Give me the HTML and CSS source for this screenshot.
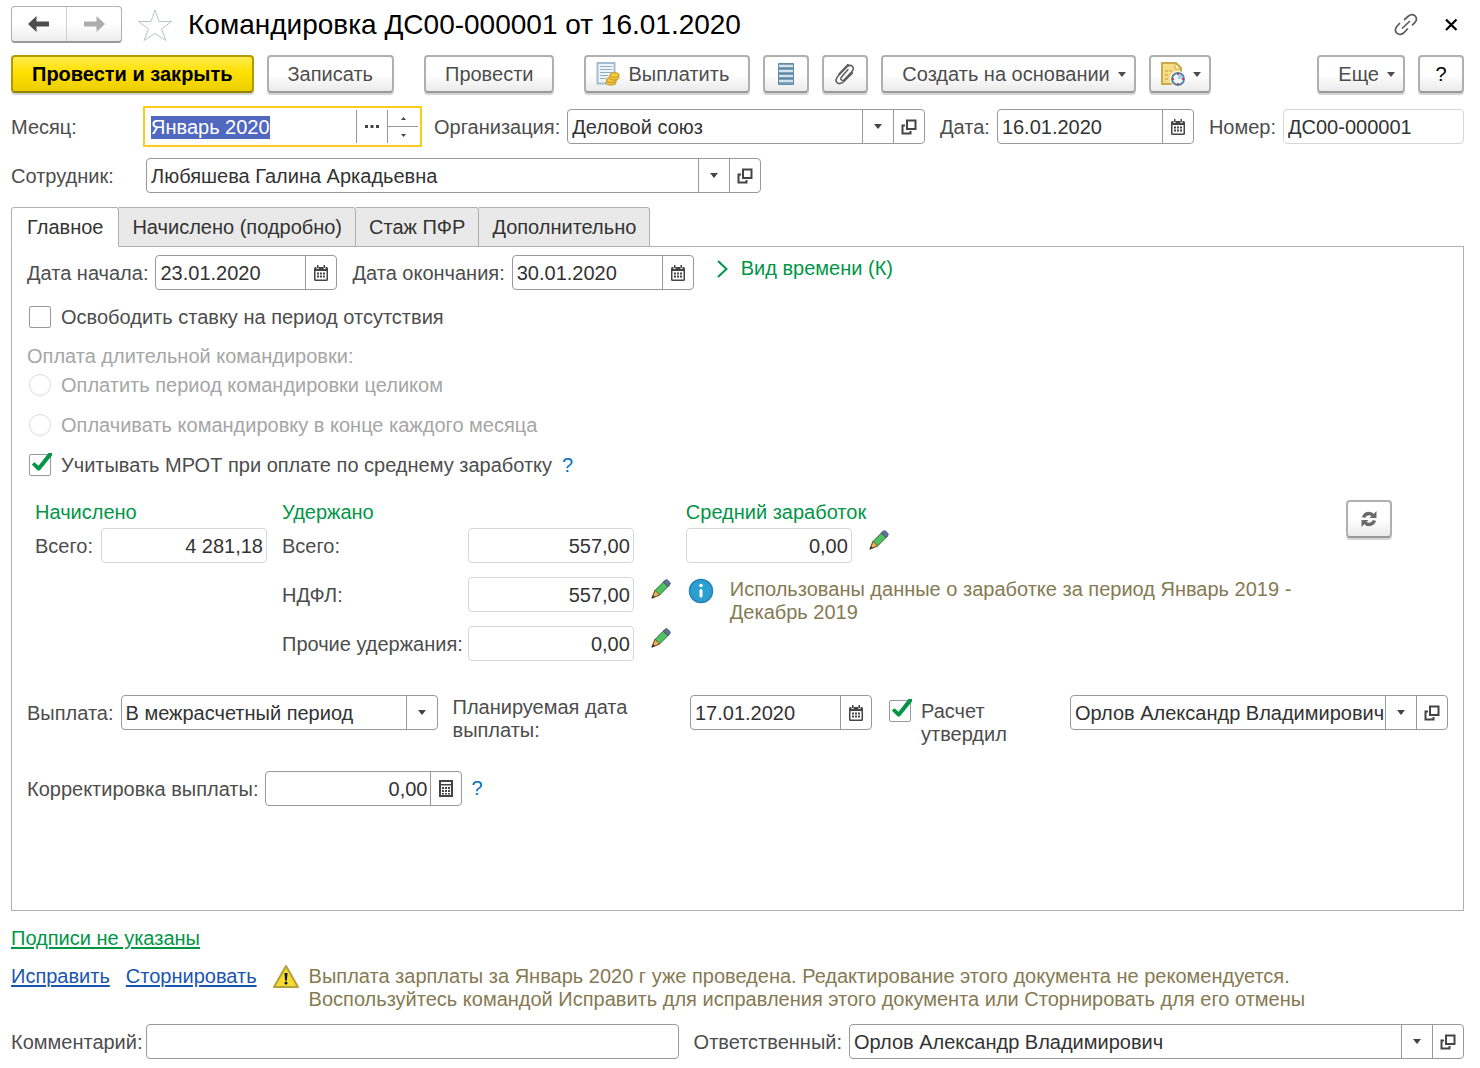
FILE: index.html
```html
<!DOCTYPE html>
<html lang="ru">
<head>
<meta charset="utf-8">
<title>Командировка ДС00-000001 от 16.01.2020</title>
<link rel="stylesheet" href="styles.css">
</head>
<body>
<svg class="sprite" aria-hidden="true">
  <symbol id="i-arrow" viewBox="0 0 8 5"><path d="M0 0h8L4 5z" fill="currentColor"/></symbol>
  <symbol id="i-open" viewBox="0 0 16 16"><path d="M6 1.500h8.500v8.500H6zM4 6.500H1.500v8H9.500V12" fill="none" stroke="currentColor" stroke-width="2"/></symbol>
  <symbol id="i-calendar" viewBox="0 0 14 16">
    <path d="M1.500 2h11A1.500 1.500 0 0 1 14 3.500v11a1.500 1.500 0 0 1-1.500 1.500h-11A1.500 1.500 0 0 1 0 14.500v-11A1.500 1.500 0 0 1 1.500 2z" fill="currentColor"/>
    <path d="M1.500 6h11v8.500h-11zM2.500 1h2v3h-2zM9.500 1h2v3h-2z" fill="#fff"/>
    <path d="M3 0h1.500v3H3zM9.500 0H11v3H9.500zM6 7.500h2v2H6zM9 7.500h2v2H9zM3 10.500h2v2H3zM6 10.500h2v2H6zM9 10.500h2v2H9zM3 7.500h2v2H3z" fill="currentColor"/>
  </symbol>
  <symbol id="i-calc" viewBox="0 0 14 17">
    <path d="M1 1h12v15H1z" fill="#fff" stroke="currentColor" stroke-width="2"/>
    <path d="M2 4h10v1.500H2zM3 7h2v2H3zM6 7h2v2H6zM9 7h2v2H9zM3 10h2v2H3zM6 10h2v2H6zM9 10h2v2H9zM3 13h2v1.500H3zM6 13h2v1.500H6zM9 13h2v1.500H9z" fill="currentColor"/>
  </symbol>
  <symbol id="i-check" viewBox="0 0 22 22" overflow="visible"><path d="M2.800 10.500 5.500 8.300 9.500 11.800 19.500-1 23-1v2.500L11.200 16q-1.500 1.200-3 0z" fill="#009646"/></symbol>
  <symbol id="i-pencil" viewBox="0 0 22 22">
    <path d="M1 21 4.500 12.500 15 2l5 5L9.500 17.500z" fill="#4ec35f" stroke="#245c33"/>
    <path d="M1 21 4.500 12.500 9.500 17.500z" fill="#f1b155" stroke="#6e4a20"/>
    <path d="M1 21l1.300-3.200 2 1.900z" fill="#333"/>
    <path d="M13.500 3.500 16 1.200q1-.9 2-.1l2.800 2.700q.8 1 0 2L18.500 8.400z" fill="#5f7396" stroke="#3e4a66"/>
  </symbol>
</svg>

<header class="header">
  <div class="nav">
    <button type="button" aria-label="Назад"><svg width="22" height="16" viewBox="0 0 22 16"><path d="M0 8 8.500 0v5.500H21v5H8.500V16z" fill="#4d4d4d"/></svg></button>
    <button type="button" aria-label="Вперед"><svg width="22" height="16" viewBox="0 0 22 16"><path d="M22 8 13.500 0v5.500H1v5h12.500V16z" fill="#adadad"/></svg></button>
  </div>
  <button class="icon-button" type="button" aria-label="В избранное"><svg width="36" height="34" viewBox="0 0 36 34"><path d="M18 2l4 11.500h12.500L24.500 21l4.500 11.500L18 25.500 7 32.500 11.500 21 1.500 13.500H14z" fill="#fff" stroke="#bcc3ca"/></svg></button>
  <h1 class="title">Командировка ДС00-000001 от 16.01.2020</h1>
  <button class="icon-button" type="button" aria-label="Получить ссылку"><svg width="24" height="24" viewBox="0 0 24 24" fill="none" stroke="#5c5c5c" stroke-width="1.700" stroke-linecap="round"><path d="M8.500 15 15.500 8.500M10.500 6.500 14.500 3q3.500-2.800 6.500-.2 2.800 3.200.2 6.400l-2.700 2.600M5.500 10.500 2.800 13.500q-2.800 3.700 0 6.700 3.300 2.600 6.700-.2L13.500 16"/></svg></button>
  <button class="icon-button" type="button" aria-label="Закрыть"><svg width="12" height="12" viewBox="0 0 12 12"><path d="M1 0.500l10.500 10.500M11.500 0.500 1 11" stroke="#000" stroke-width="2.200"/></svg></button>
</header>

<div class="toolbar">
  <button class="btn btn-primary" type="button">Провести и закрыть</button>
  <button class="btn" type="button">Записать</button>
  <button class="btn group-start" type="button">Провести</button>
  <button class="btn btn-with-icon group-start" type="button">
    <svg width="24" height="24" viewBox="0 0 24 24">
      <path d="M1.500 1h17v20.500h-17z" fill="#edf4fa" stroke="#a5bccd" stroke-width="2"/>
      <path d="M4 4.500h12M4 7.500h12M4 10.500h12M4 13.500h8M4 16.500h6" stroke="#93acbf"/>
      <g fill="#f5cb3e" stroke="#c38c1c"><ellipse cx="15" cy="20.500" rx="5" ry="2.500"/><ellipse cx="15.500" cy="18" rx="5" ry="2.500"/><ellipse cx="18" cy="15.500" rx="5" ry="2.500"/><ellipse cx="18.500" cy="13" rx="4.500" ry="2.300"/></g>
    </svg>Выплатить</button>
  <button class="btn btn-icon" type="button" aria-label="Реестр"><svg width="16" height="22" viewBox="0 0 16 22"><path d="M.500.500h15v21H.500z" fill="#7fa2bb" stroke="#638aa5"/><path d="M1 3h14M1 8h14M1 13h14M1 18h14" stroke="#d3e3ee" stroke-width="2"/><path d="M1 5.500h14M1 10.500h14M1 15.500h14" stroke="#5b84a0"/></svg></button>
  <button class="btn btn-icon" type="button" aria-label="Присоединенные файлы"><svg width="20" height="22" viewBox="0 0 20 22"><path d="M13 6.500 6.500 14q-1.500 2 0 3t3-.5L17 8.500q2.500-3.200.3-5.200t-5.300.4L3.500 12.500q-4 4.500-1.500 7t6.500-.5L17.500 10M13 1.500 4 11" fill="none" stroke="#5a5a5a" stroke-width="1.500" stroke-linecap="round"/></svg></button>
  <button class="btn btn-menu" type="button">Создать на основании<svg width="8" height="5"><use href="#i-arrow"/></svg></button>
  <button class="btn btn-menu btn-report" type="button" aria-label="Отчеты"><svg width="24" height="24" viewBox="0 0 24 24">
      <path d="M1 1h14l5 5v16H1z" fill="#f6dc85" stroke="#cba84a" stroke-width="2"/><path d="M14 1v6h6z" fill="#fff3c4" stroke="#cba84a"/>
      <path d="M4 9h3M8 9h3M4 13h3M4 17h3" stroke="#bd9a3f"/>
      <circle cx="17" cy="17" r="8" fill="#fff"/><circle cx="17" cy="17" r="6" fill="#eef5fb" stroke="#5783aa" stroke-width="2"/><path d="M17 17v-5a5 5 0 0 1 5 5z" fill="#aecbf0"/>
      <path d="M17 11v2M17 21v2M11 17h2M21 17h2" stroke="#e02020" stroke-width="1.500"/></svg><svg width="8" height="5"><use href="#i-arrow"/></svg></button>
  <button class="btn btn-menu push" type="button">Еще<svg width="8" height="5"><use href="#i-arrow"/></svg></button>
  <button class="btn btn-icon btn-help" type="button">?</button>
</div>

<div class="row">
  <div class="pair">
    <label class="head-label" for="month">Месяц:</label>
    <div class="field field-active">
      <input id="month" type="text" value="Январь 2020">
      <button type="button" aria-label="Выбрать"><svg width="14" height="3" viewBox="0 0 14 3"><path d="M0 0h3v3H0zM5.500 0h3v3h-3zM11 0h3v3h-3z" fill="#444"/></svg></button>
      <div class="stepper">
        <button type="button" aria-label="Следующий месяц"><svg width="5" height="3" viewBox="0 0 5 3"><path d="M0 3h5L2.500 0z" fill="#444"/></svg></button>
        <button type="button" aria-label="Предыдущий месяц"><svg width="5" height="3" viewBox="0 0 5 3"><path d="M0 0h5L2.500 3z" fill="#444"/></svg></button>
      </div>
    </div>
  </div>
  <div class="pair grow">
    <label for="org">Организация:</label>
    <div class="field grow">
      <div class="select"><select id="org"><option>Деловой союз</option></select><span class="select-arrow"><svg width="8" height="5"><use href="#i-arrow"/></svg></span></div>
      <button type="button" aria-label="Открыть организацию"><svg width="16" height="16"><use href="#i-open"/></svg></button>
    </div>
  </div>
  <div class="pair">
    <label for="date">Дата:</label>
    <div class="field w-medium"><input id="date" type="text" value="16.01.2020"><button type="button" aria-label="Календарь"><svg width="14" height="16"><use href="#i-calendar"/></svg></button></div>
  </div>
  <div class="pair">
    <label for="number">Номер:</label>
    <div class="field field-readonly w-number"><input id="number" type="text" value="ДС00-000001" readonly></div>
  </div>
</div>

<div class="row">
  <div class="pair">
    <label class="head-label" for="employee">Сотрудник:</label>
    <div class="field w-person">
      <div class="select"><select id="employee"><option>Любяшева Галина Аркадьевна</option></select><span class="select-arrow"><svg width="8" height="5"><use href="#i-arrow"/></svg></span></div>
      <button type="button" aria-label="Открыть сотрудника"><svg width="16" height="16"><use href="#i-open"/></svg></button>
    </div>
  </div>
</div>

<div class="tabs" role="tablist">
  <button class="tab tab-active" type="button" role="tab" aria-selected="true">Главное</button>
  <button class="tab" type="button" role="tab">Начислено (подробно)</button>
  <button class="tab" type="button" role="tab">Стаж ПФР</button>
  <button class="tab" type="button" role="tab">Дополнительно</button>
</div>

<main class="panel">
  <div class="period">
    <div class="pair">
      <label for="start">Дата начала:</label>
      <div class="field w-date"><input id="start" type="text" value="23.01.2020"><button type="button" aria-label="Календарь"><svg width="14" height="16"><use href="#i-calendar"/></svg></button></div>
    </div>
    <div class="pair">
      <label for="end">Дата окончания:</label>
      <div class="field w-date"><input id="end" type="text" value="30.01.2020"><button type="button" aria-label="Календарь"><svg width="14" height="16"><use href="#i-calendar"/></svg></button></div>
    </div>
    <button class="expander" type="button"><svg width="11" height="18" viewBox="0 0 11 18"><path d="M1 1l8.500 8L1 17" fill="none" stroke="#009646" stroke-width="2"/></svg>Вид времени (К)</button>
  </div>

  <div class="options">
    <div class="option"><span class="box"><input id="free" type="checkbox"><svg class="mark" width="22" height="22"><use href="#i-check"/></svg></span><label for="free">Освободить ставку на период отсутствия</label></div>
    <fieldset class="choice" disabled>
      <legend>Оплата длительной командировки:</legend>
      <div class="option"><input id="pay-whole" name="pay" type="radio"><label for="pay-whole">Оплатить период командировки целиком</label></div>
      <div class="option"><input id="pay-month" name="pay" type="radio"><label for="pay-month">Оплачивать командировку в конце каждого месяца</label></div>
    </fieldset>
    <div class="option"><span class="box"><input id="mrot" type="checkbox" checked><svg class="mark" width="22" height="22"><use href="#i-check"/></svg></span><label for="mrot">Учитывать МРОТ при оплате по среднему заработку</label><button class="hint" type="button">?</button></div>
  </div>

  <div class="totals">
    <section class="total total-accrued">
      <h2>Начислено</h2>
      <label for="accrued">Всего:</label>
      <div class="field field-readonly"><input id="accrued" class="amount" type="text" value="4 281,18" readonly></div>
    </section>
    <section class="total total-withheld">
      <h2>Удержано</h2>
      <label for="withheld">Всего:</label>
      <div class="field field-readonly"><input id="withheld" class="amount" type="text" value="557,00" readonly></div>
      <span></span>
      <label for="ndfl">НДФЛ:</label>
      <div class="field field-readonly"><input id="ndfl" class="amount" type="text" value="557,00" readonly></div>
      <button class="edit" type="button" aria-label="Изменить НДФЛ"><svg width="20" height="20"><use href="#i-pencil"/></svg></button>
      <label for="other">Прочие удержания:</label>
      <div class="field field-readonly"><input id="other" class="amount" type="text" value="0,00" readonly></div>
      <button class="edit" type="button" aria-label="Изменить прочие удержания"><svg width="20" height="20"><use href="#i-pencil"/></svg></button>
    </section>
    <section class="total total-average">
      <h2><label for="average">Средний заработок</label></h2>
      <div class="field field-readonly"><input id="average" class="amount" type="text" value="0,00" readonly></div>
      <button class="edit" type="button" aria-label="Изменить средний заработок"><svg width="20" height="20"><use href="#i-pencil"/></svg></button>
      <div class="note">
        <svg width="26" height="26" viewBox="0 0 26 26"><circle cx="13" cy="13" r="11.500" fill="#2b9fd0" stroke="#2482b4" stroke-width="1.500"/><circle cx="13" cy="7.500" r="1.800" fill="#fff"/><rect x="11.500" y="11" width="3" height="8.500" rx="1.500" fill="#fff"/></svg>
        <p>Использованы данные о заработке за период Январь 2019 - Декабрь 2019</p>
      </div>
    </section>
    <button class="btn btn-icon refresh" type="button" aria-label="Пересчитать"><svg width="16" height="16" viewBox="0 0 16 16"><path d="M2.500 6.500Q4 2.500 8 2.500q2.500 0 4 2M13.500 9.500q-1.500 4-5.500 4-2.500 0-4-2" fill="none" stroke="#6a6a6a" stroke-width="3.500"/><path d="M15.500 0v7H8.500zM.500 16V9h7z" fill="#6a6a6a"/></svg></button>
  </div>

  <div class="payment">
    <div class="pair">
      <label for="payout">Выплата:</label>
      <div class="field w-payout"><div class="select"><select id="payout"><option>В межрасчетный период</option></select><span class="select-arrow"><svg width="8" height="5"><use href="#i-arrow"/></svg></span></div></div>
    </div>
    <div class="pair pair-top grow">
      <label class="plan-label" for="plan">Планируемая дата выплаты:</label>
      <div class="field w-date"><input id="plan" type="text" value="17.01.2020"><button type="button" aria-label="Календарь"><svg width="14" height="16"><use href="#i-calendar"/></svg></button></div>
    </div>
    <div class="option approve"><span class="box"><input id="approved" type="checkbox" checked><svg class="mark" width="22" height="22"><use href="#i-check"/></svg></span><label for="approved">Расчет утвердил</label></div>
    <div class="field w-approver">
      <div class="select"><select aria-label="Расчет утвердил"><option>Орлов Александр Владимирович</option></select><span class="select-arrow"><svg width="8" height="5"><use href="#i-arrow"/></svg></span></div>
      <button type="button" aria-label="Открыть"><svg width="16" height="16"><use href="#i-open"/></svg></button>
    </div>
  </div>

  <div class="pair correction">
    <label for="correction">Корректировка выплаты:</label>
    <div class="field w-medium"><input id="correction" class="amount" type="text" value="0,00"><button type="button" aria-label="Калькулятор"><svg width="14" height="17"><use href="#i-calc"/></svg></button></div>
    <button class="hint" type="button">?</button>
  </div>
</main>

<footer class="footer">
  <a class="link-green" href="#signatures">Подписи не указаны</a>
  <div class="warning">
    <a href="#fix">Исправить</a>
    <a href="#storno">Сторнировать</a>
    <svg width="26" height="24" viewBox="0 0 26 24"><path d="M13 1 25 22H1z" fill="#f5dc33" stroke="#b5a03a" stroke-width="2" stroke-linejoin="round"/><path d="M11.500 8h3l-.6 7.500h-1.800z" fill="#111"/><circle cx="13" cy="18" r="1.500" fill="#111"/></svg>
    <p>Выплата зарплаты за Январь 2020 г уже проведена. Редактирование этого документа не рекомендуется.<br>Воспользуйтесь командой Исправить для исправления этого документа или Сторнировать для его отмены</p>
  </div>
  <div class="row">
    <div class="pair grow">
      <label class="head-label" for="comment">Комментарий:</label>
      <div class="field grow"><input id="comment" type="text"></div>
    </div>
    <div class="pair">
      <label for="responsible">Ответственный:</label>
      <div class="field w-person">
        <div class="select"><select id="responsible"><option>Орлов Александр Владимирович</option></select><span class="select-arrow"><svg width="8" height="5"><use href="#i-arrow"/></svg></span></div>
        <button type="button" aria-label="Открыть ответственного"><svg width="16" height="16"><use href="#i-open"/></svg></button>
      </div>
    </div>
  </div>
</footer>
<script src="script.js"></script>
</body>
</html>
```
FILE: styles.css
```css
* { box-sizing: border-box; }

body {
  margin: 0;
  min-height: 100vh;
  padding: 6px 16px 9px 11px;
  display: flex;
  flex-direction: column;
  background: #fff;
  color: #4d4d4d;
  font: 20px/23px "Liberation Sans", Arial, sans-serif;
}

button, input, select { font: inherit; color: inherit; margin: 0; }
button { padding: 0; border: 0; background: none; cursor: pointer; }
svg { display: block; flex: none; overflow: visible; }
h1, h2, p { margin: 0; font-weight: normal; }
.sprite { position: absolute; width: 0; height: 0; }
.grow { flex: 1; }

/* Window header */
.header { display: flex; align-items: center; height: 37px; }
.nav {
  display: flex;
  width: 111px;
  height: 37px;
  border: 1px solid #b0b0b0;
  border-bottom: 2px solid #999;
  border-radius: 4px;
  background: linear-gradient(#fff 50%, #ececec);
}
.nav button { flex: 1; display: flex; align-items: center; justify-content: center; }
.nav button + button { border-left: 1px solid #d0d0d0; }
.icon-button { display: flex; margin-left: 15px; }
.title { flex: 1; margin-left: 15px; font-size: 28px; line-height: 36px; color: #000; }
.header .icon-button:last-child { margin: 0 7px 0 27px; }

/* Command bar */
.toolbar { display: flex; gap: 13px; margin-top: 12px; }
.btn {
  display: flex;
  align-items: center;
  justify-content: center;
  height: 38px;
  padding: 0 19px;
  border: 2px solid #b0b0b0;
  border-bottom-color: #999;
  border-radius: 4px;
  background: linear-gradient(#fff 50%, #ebebeb);
  box-shadow: 0 2px 0 #d4d4d4;
  white-space: nowrap;
}
.btn-primary {
  border-color: #b39a00;
  border-bottom-color: #948000;
  background: linear-gradient(#ffec4d, #ffe000 45%, #ebcf00);
  color: #000;
  font-weight: bold;
}
.group-start { margin-left: 17px; }
.btn-with-icon { padding-left: 10px; gap: 8px; }
.btn-icon { width: 46px; padding: 0; }
.btn-menu { gap: 8px; padding-right: 8px; }
.btn-report { padding-left: 10px; }
.btn-help { color: #000; }
.push { margin-left: auto; }

/* Labelled fields */
.row { display: flex; gap: 15px; margin-top: 14px; }
.toolbar + .row { margin-top: 16px; }
.pair { display: flex; align-items: center; gap: 7px; }
.pair > label { padding-top: 1px; }
.pair-top { align-items: flex-start; }
.head-label { width: 128px; flex: none; white-space: nowrap; }
.field {
  display: flex;
  height: 35px;
  border: 1px solid #999;
  border-radius: 4px;
  background: #fff;
  color: #333;
}
.field input {
  flex: 1;
  min-width: 0;
  width: 0;
  padding: 1px 4px 0;
  border: 0;
  background: none;
  outline: 0;
}
.field .amount { text-align: right; padding: 1px 3px 0; }
.field button {
  display: flex;
  align-items: center;
  justify-content: center;
  width: 31px;
  border-left: 1px solid #999;
  color: #444;
}
.field-readonly { border-color: #d6d6d6; }
.field-active {
  width: 273px;
  border-color: transparent;
  border-radius: 0;
  outline: 2px solid #fccb1b;
  outline-offset: 1px;
}
.field-active ::selection { background: #5068c0; color: #fff; }
.stepper { display: flex; flex-direction: column; width: 31px; border-left: 1px solid #999; }
.field .stepper button { flex: 1; width: auto; border-left: 0; }
.field .stepper button + button { border-top: 1px solid #999; }

.select { display: grid; flex: 1; min-width: 0; }
.select select {
  grid-area: 1 / 1;
  width: 100%;
  min-width: 0;
  padding: 1px 31px 0 4px;
  border: 0;
  outline: 0;
  background: none;
  appearance: none;
}
.select-arrow {
  grid-area: 1 / 1;
  justify-self: end;
  display: flex;
  align-items: center;
  justify-content: center;
  width: 31px;
  border-left: 1px solid #999;
  color: #444;
  pointer-events: none;
}

.w-date { width: 182px; }
.w-medium { width: 197px; }
.w-number { width: 181px; }
.w-person { width: 615px; }
.w-payout { width: 317px; }
.w-approver { width: 378px; }

/* Tabs */
.tabs { position: relative; z-index: 1; display: flex; margin-top: 14px; }
.tab {
  height: 40px;
  padding: 0 13px;
  border: 1px solid #b0b0b0;
  border-left-width: 0;
  border-radius: 0 3px 0 0;
  background: #e9e9e9;
  color: #333;
}
.tab-active {
  padding: 0 15px;
  border-left-width: 1px;
  border-bottom-color: #fff;
  border-radius: 3px 3px 0 0;
  background: #fff;
}
.panel {
  flex: 1;
  display: flex;
  flex-direction: column;
  margin-top: -1px;
  padding: 8px 15px;
  border: 1px solid #b0b0b0;
}

.period { display: flex; gap: 15px; }
.expander { display: flex; align-items: center; gap: 13px; height: 27px; margin-left: 8px; color: #009646; }

/* Check boxes and radio buttons */
.options { display: flex; flex-direction: column; gap: 16px; margin-top: 15px; }
.option { display: flex; align-items: center; gap: 10px; padding-left: 2px; line-height: 24px; }
.box { display: grid; flex: none; }
.option input {
  grid-area: 1 / 1;
  appearance: none;
  flex: none;
  width: 22px;
  height: 22px;
  border: 1px solid #999;
  border-radius: 2px;
  background: #fff;
}
.option input[type="radio"] { border-color: #dcdcdc; border-radius: 50%; }
.mark { grid-area: 1 / 1; visibility: hidden; pointer-events: none; }
input:checked + .mark { visibility: visible; }
.choice {
  display: flex;
  flex-direction: column;
  gap: 16px;
  margin: 0;
  padding: 0;
  border: 0;
  color: #a6a6a6;
}
.choice legend { padding: 0 0 5px; line-height: 23px; }
.hint { color: #0072bc; }
.correction .hint { margin-left: 2px; }

/* Totals */
.totals { display: flex; align-items: flex-start; gap: 15px; margin-top: 23px; padding-left: 8px; }
.total { display: grid; align-items: center; row-gap: 14px; }
.total > label { padding-top: 1px; }
.total h2 { grid-column: 1 / -1; margin-bottom: -10px; font-size: 20px; line-height: 24px; color: #009646; }
.total-accrued { grid-template-columns: auto 166px; column-gap: 8px; }
.total-withheld { grid-template-columns: auto 166px 32px; column-gap: 5px; }
.total-average { flex: 1; grid-template-columns: 166px 37px 1fr; }
.edit { display: flex; justify-self: end; align-self: start; padding-top: 2px; }
.note { grid-column: 1 / -1; display: flex; gap: 16px; align-self: start; padding: 1px 0 0 2px; color: #857a52; }
.note p { max-width: 600px; }
.refresh { margin-right: 56px; }

/* Payment */
.payment { display: flex; align-items: flex-start; gap: 15px; margin-top: 34px; }
.plan-label { flex: 1; }
.approve { align-items: flex-start; width: 168px; padding-top: 5px; line-height: 23px; }
.correction { margin-top: 25px; }

/* Footer */
.footer { margin-top: 16px; }
.footer a { color: #1a55b0; text-underline-offset: 2px; }
.footer .link-green { color: #009646; }
.warning { display: flex; gap: 16px; margin-top: 15px; color: #857a52; }
.warning p { margin-left: -6px; }
.footer .row { margin-top: 13px; }
```
FILE: script.js
```js
const month = document.getElementById("month");
month.focus();
month.select();
```
